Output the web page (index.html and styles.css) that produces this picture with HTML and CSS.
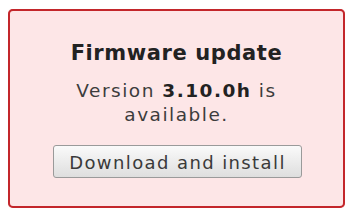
FILE: index.html
```html
<!DOCTYPE html>
<html lang="en">
<head>
    <meta charset="UTF-8">
    <title>Firmware update</title>
    <link rel="stylesheet" href="styles.css">
</head>
<body>
    <div class="notice">
        <h2 class="notice-title">Firmware update</h2>
        <p class="notice-text">Version <b>3.10.0h</b> is available.</p>
        <button class="notice-button" type="button">Download and install</button>
    </div>
</body>
</html>
```

FILE: styles.css
```css
body {
    margin: 9px 3px 4px 8px;
    background: #ffffff;
    font-family: "DejaVu Sans", Verdana, sans-serif;
}

.notice {
    box-sizing: border-box;
    height: 199px;
    width: 337px;
    padding: 29px 20px 0;
    border: 2px solid #c3262b;
    border-radius: 5px;
    background: #fde6e7;
    box-shadow: 0 0 1px #e07070;
    text-align: center;
}

.notice-title {
    margin: 0;
    font-size: 21px;
    line-height: 26px;
    font-weight: bold;
    letter-spacing: 0.6px;
    color: #222222;
}

.notice-text {
    margin: 13px auto 0;
    width: 240px;
    font-size: 18.5px;
    line-height: 24px;
    letter-spacing: 1.5px;
    color: #3c3c3c;
}

.notice-text b {
    color: #222222;
}

.notice-button {
    margin: 18px 0 0 23px;
    display: block;
    width: 249px;
    height: 33px;
    padding: 2px 0 0;
    border: 1px solid #9a9a9a;
    border-radius: 3px;
    background: linear-gradient(#fafafa, #dedede);
    font-family: "DejaVu Sans", Verdana, sans-serif;
    font-size: 18px;
    letter-spacing: 1.4px;
    color: #3a3a3a;
}
```
